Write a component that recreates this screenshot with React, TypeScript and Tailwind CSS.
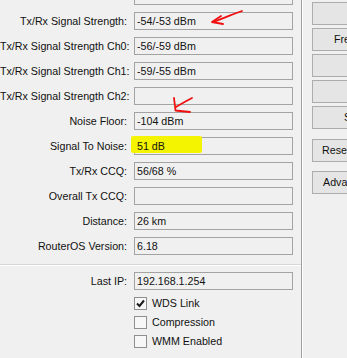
import React from 'react';

type Row = { label: string; value: string };

const rows: Row[] = [
  { label: 'Tx/Rx Frames:', value: '180328/152805' },
  { label: 'Tx/Rx Signal Strength:', value: '-54/-53 dBm' },
  { label: 'Tx/Rx Signal Strength Ch0:', value: '-56/-59 dBm' },
  { label: 'Tx/Rx Signal Strength Ch1:', value: '-59/-55 dBm' },
  { label: 'Tx/Rx Signal Strength Ch2:', value: '' },
  { label: 'Noise Floor:', value: '-104 dBm' },
  { label: 'Signal To Noise:', value: '51 dB' },
  { label: 'Tx/Rx CCQ:', value: '56/68 %' },
  { label: 'Overall Tx CCQ:', value: '' },
  { label: 'Distance:', value: '26 km' },
  { label: 'RouterOS Version:', value: '6.18' },
];

const buttons = [
  { text: '', pad: 'pl-[20px]', mt: 'mt-[2px]' },
  { text: 'Freeze', pad: 'pl-[21px]', mt: 'mt-[3px]' },
  { text: '', pad: 'pl-[20px]', mt: 'mt-[3px]' },
  { text: '', pad: 'pl-[20px]', mt: 'mt-[3px]' },
  { text: 'Scan', pad: 'pl-[31px]', mt: 'mt-[3px]' },
  { text: 'Reset Counters', pad: 'pl-[9px]', mt: 'mt-[10px]' },
  { text: 'Advanced', pad: 'pl-[10px]', mt: 'mt-[9px]' },
];

function Field({ label, value }: Row) {
  return (
    <div className="flex items-center h-[18px]">
      <div className="w-[127px] text-right whitespace-nowrap">{label}</div>
      <div className="ml-[7px] w-[159px] h-[18px] border border-[#a3a3a3] flex items-center pl-[2px] whitespace-nowrap overflow-hidden">
        <span className="relative z-10">{value}</span>
      </div>
    </div>
  );
}

function Check({ label, checked }: { label: string; checked?: boolean }) {
  return (
    <div className="flex items-center h-[19px] pl-[134px]">
      <div className="w-[13px] h-[13px] border border-[#8f8f8f] bg-[#f7f7f7] flex items-center justify-center">
        {checked && (
          <svg width="9" height="9" viewBox="0 0 9 9">
            <path d="M1 4.5 L3.5 7 L8 1.5" stroke="#1a1a1a" strokeWidth="2" fill="none" />
          </svg>
        )}
      </div>
      <span className="ml-[5px]">{label}</span>
    </div>
  );
}

export default function App() {
  return (
    <div className="relative w-[347px] h-[358px] overflow-hidden bg-[#f0f0f0] text-[10.7px] text-[#111] font-['Liberation_Sans',Arial,sans-serif] flex">
      {/* left panel */}
      <div className="w-[301px] shrink-0">
        <div className="flex flex-col gap-[7px] mt-[-13px]">
          {rows.map((r) => (
            <Field key={r.label} {...r} />
          ))}
        </div>
        <div className="mt-[9px] h-px bg-[#d7d7d7]" />
        <div className="h-px bg-white" />
        <div className="mt-[6px]">
          <Field label="Last IP:" value="192.168.1.254" />
        </div>
        <div className="mt-[4px]">
          <Check label="WDS Link" checked />
          <Check label="Compression" />
          <Check label="WMM Enabled" />
        </div>
      </div>

      {/* divider */}
      <div className="w-px bg-[#a0a0a0] shrink-0" />
      <div className="w-px bg-white shrink-0" />

      {/* buttons */}
      <div className="flex flex-col pl-[9px] shrink-0">
        {buttons.map((b, i) => (
          <div
            key={i}
            className={`${b.mt} ${b.pad} w-[80px] h-[23px] border border-[#adadad] bg-[#e5e5e5] flex items-center whitespace-nowrap`}
          >
            {b.text}
          </div>
        ))}
      </div>

      {/* yellow highlighter */}
      <div className="absolute left-[131px] top-[136px] w-[71px] h-[17px] bg-[#f4f400] rounded-[2px]" />

      {/* red pen marks */}
      <svg className="absolute left-0 top-0 pointer-events-none" width="347" height="358">
        <g stroke="#f01010" strokeWidth="1.8" fill="none" strokeLinecap="round" strokeLinejoin="round">
          <path d="M242 11 C235 13 225 18 213 22" />
          <path d="M221 16 L212 22 L223 24" />
          <path d="M192 98 C186 101 181 104 176 107" />
          <path d="M174 98 L175.5 110.5 L190 112" />
        </g>
      </svg>
    </div>
  );
}
